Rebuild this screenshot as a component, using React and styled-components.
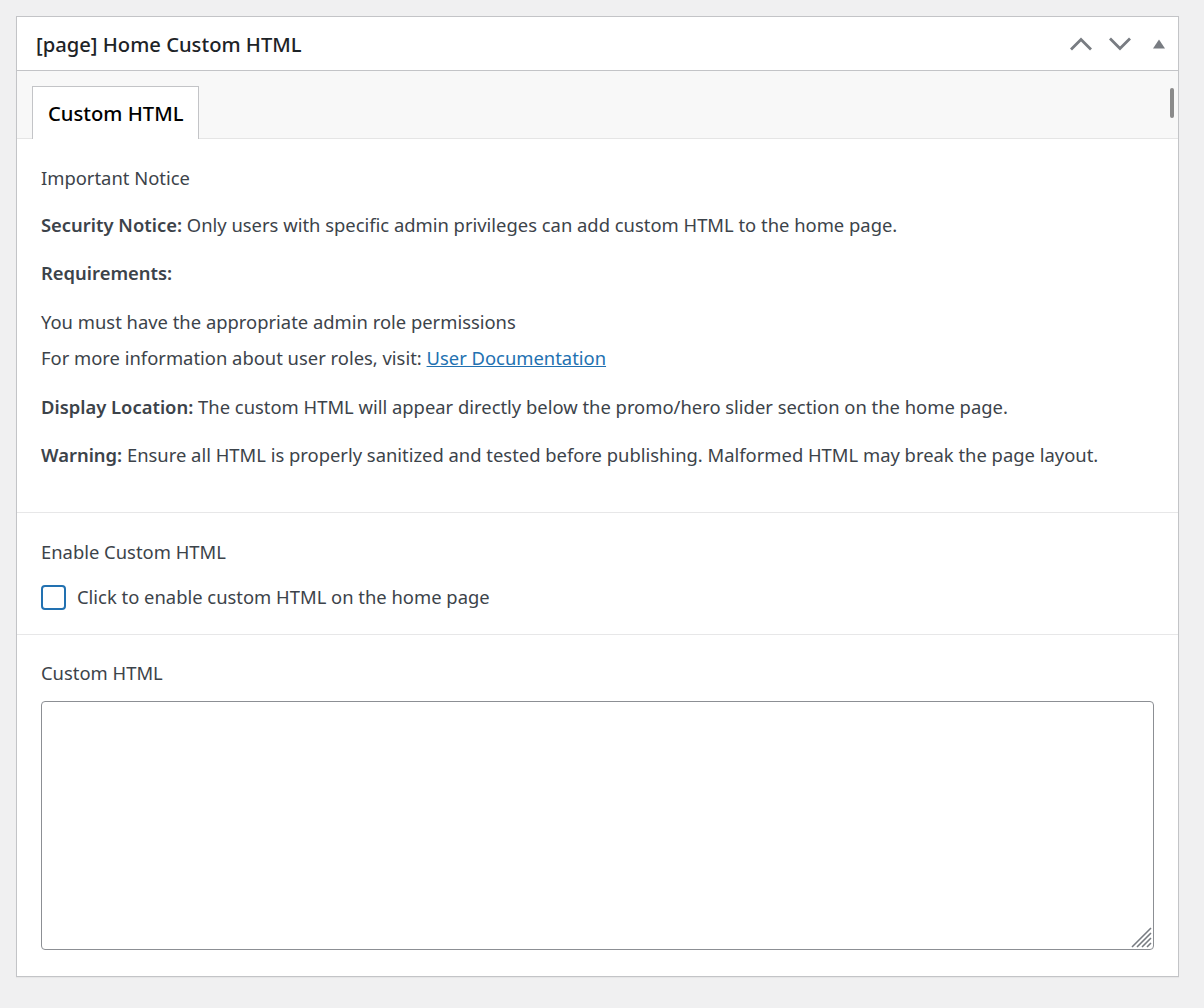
import React from "react";
import styled, { createGlobalStyle } from "styled-components";

const GlobalStyle = createGlobalStyle`
  html, body {
    margin: 0;
    padding: 0;
    background: #f0f0f1;
  }
  body {
    font-family: "Noto Sans", "Open Sans", sans-serif;
    color: #3c434a;
  }
`;

const Page = styled.div`
  padding: 16px 25px 32px 16px;
  min-height: 1008px;
  box-sizing: border-box;
`;

const Postbox = styled.div`
  background: #fff;
  border: 1px solid #c3c4c7;
  box-shadow: 0 1px 1px rgba(0, 0, 0, 0.04);
`;

const Header = styled.div`
  display: flex;
  align-items: center;
  height: 53px;
  padding: 0 0 0 19px;
  border-bottom: 1px solid #c3c4c7;
`;

const Title = styled.h2`
  flex: 1;
  margin: 0;
  font-size: 20.2px;
  font-weight: 500;
  color: #1d2327;
`;

const Handles = styled.div`
  display: flex;
  align-items: center;
`;

const HandleButton = styled.button`
  width: 39px;
  height: 40px;
  border: 0;
  background: none;
  padding: 0;
  display: flex;
  align-items: center;
  justify-content: center;
  color: #787c82;
  cursor: pointer;
`;

const TabBar = styled.div`
  position: relative;
  display: flex;
  align-items: flex-end;
  height: 67px;
  padding-left: 15px;
  background: #f8f8f8;
  border-bottom: 1px solid #e5e5e5;
`;

const Tab = styled.div`
  height: 52px;
  padding: 0 15px;
  display: flex;
  align-items: center;
  background: #fff;
  border: 1px solid #c3c4c7;
  border-bottom: 0;
  margin-bottom: -1px;
  font-size: 20.2px;
  font-weight: 500;
  color: #000;
`;

const ScrollThumb = styled.div`
  position: absolute;
  right: 4px;
  top: 17px;
  width: 4px;
  height: 30px;
  border-radius: 2px;
  background: #8a8a8a;
`;

const Section = styled.div`
  padding: ${(p) => p.$pad || "24px 24px"};
  border-bottom: ${(p) => (p.$last ? "0" : "1px solid #e7e7e8")};
`;

const Label = styled.div`
  font-size: 18.4px;
  line-height: 26px;
  margin-bottom: ${(p) => p.$gap || "22px"};
`;

const Para = styled.p`
  margin: 0 0 ${(p) => p.$gap || "22px"};
  font-size: 18.4px;
  line-height: 26px;
  strong {
    font-weight: 600;
  }
`;

const DocLink = styled.a`
  color: #2271b1;
  text-decoration: underline;
`;

const CheckRow = styled.label`
  display: flex;
  align-items: center;
  gap: 11px;
  font-size: 18.4px;
  line-height: 26px;
`;

const Checkbox = styled.span`
  width: 21px;
  height: 21px;
  border: 2px solid #2271b1;
  border-radius: 4px;
  background: #fff;
  flex: none;
`;

const TextArea = styled.div`
  position: relative;
  height: 247px;
  border: 1px solid #8c8f94;
  border-radius: 4px;
  background: #fff;
`;

const Grip = styled.svg`
  position: absolute;
  right: 1px;
  bottom: 1px;
`;

function Chevron({ up }) {
  return (
    <svg width="22" height="14" viewBox="0 0 22 14">
      <path
        d={up ? "M1 12.5 L11 2.5 L21 12.5" : "M1 1.5 L11 11.5 L21 1.5"}
        fill="none"
        stroke="currentColor"
        strokeWidth="2.8"
      />
    </svg>
  );
}

export default function App() {
  return (
    <>
      <GlobalStyle />
      <Page>
        <Postbox>
          <Header>
            <Title>[page] Home Custom HTML</Title>
            <Handles>
              <HandleButton aria-label="Move up">
                <Chevron up />
              </HandleButton>
              <HandleButton aria-label="Move down">
                <Chevron />
              </HandleButton>
              <HandleButton aria-label="Toggle panel">
                <svg width="14" height="10" viewBox="0 0 14 10">
                  <path d="M7 0.5 L13 9.5 L1 9.5 Z" fill="currentColor" />
                </svg>
              </HandleButton>
            </Handles>
          </Header>
          <TabBar>
            <Tab>Custom HTML</Tab>
            <ScrollThumb />
          </TabBar>
          <Section $pad="26px 24px 22px">
            <Label $gap="21px">Important Notice</Label>
            <Para>
              <strong>Security Notice:</strong> Only users with specific admin
              privileges can add custom HTML to the home page.
            </Para>
            <Para $gap="23px">
              <strong>Requirements:</strong>
            </Para>
            <Para $gap="10px">You must have the appropriate admin role permissions</Para>
            <Para $gap="23px">
              For more information about user roles, visit:{" "}
              <DocLink href="#">User Documentation</DocLink>
            </Para>
            <Para>
              <strong>Display Location:</strong> The custom HTML will appear
              directly below the promo/hero slider section on the home page.
            </Para>
            <Para>
              <strong>Warning:</strong> Ensure all HTML is properly sanitized and
              tested before publishing. Malformed HTML may break the page layout.
            </Para>
          </Section>
          <Section $pad="26px 24px 24px">
            <Label $gap="19px">Enable Custom HTML</Label>
            <CheckRow>
              <Checkbox />
              Click to enable custom HTML on the home page
            </CheckRow>
          </Section>
          <Section $pad="25px 24px 26px" $last>
            <Label $gap="15px">Custom HTML</Label>
            <TextArea>
              <Grip width="22" height="22" viewBox="0 0 22 22">
                <path
                  d="M21 2 L2 21 M21 7 L7 21 M21 12 L12 21 M21 17 L17 21"
                  stroke="#787c82"
                  strokeWidth="1.6"
                />
              </Grip>
            </TextArea>
          </Section>
        </Postbox>
      </Page>
    </>
  );
}
